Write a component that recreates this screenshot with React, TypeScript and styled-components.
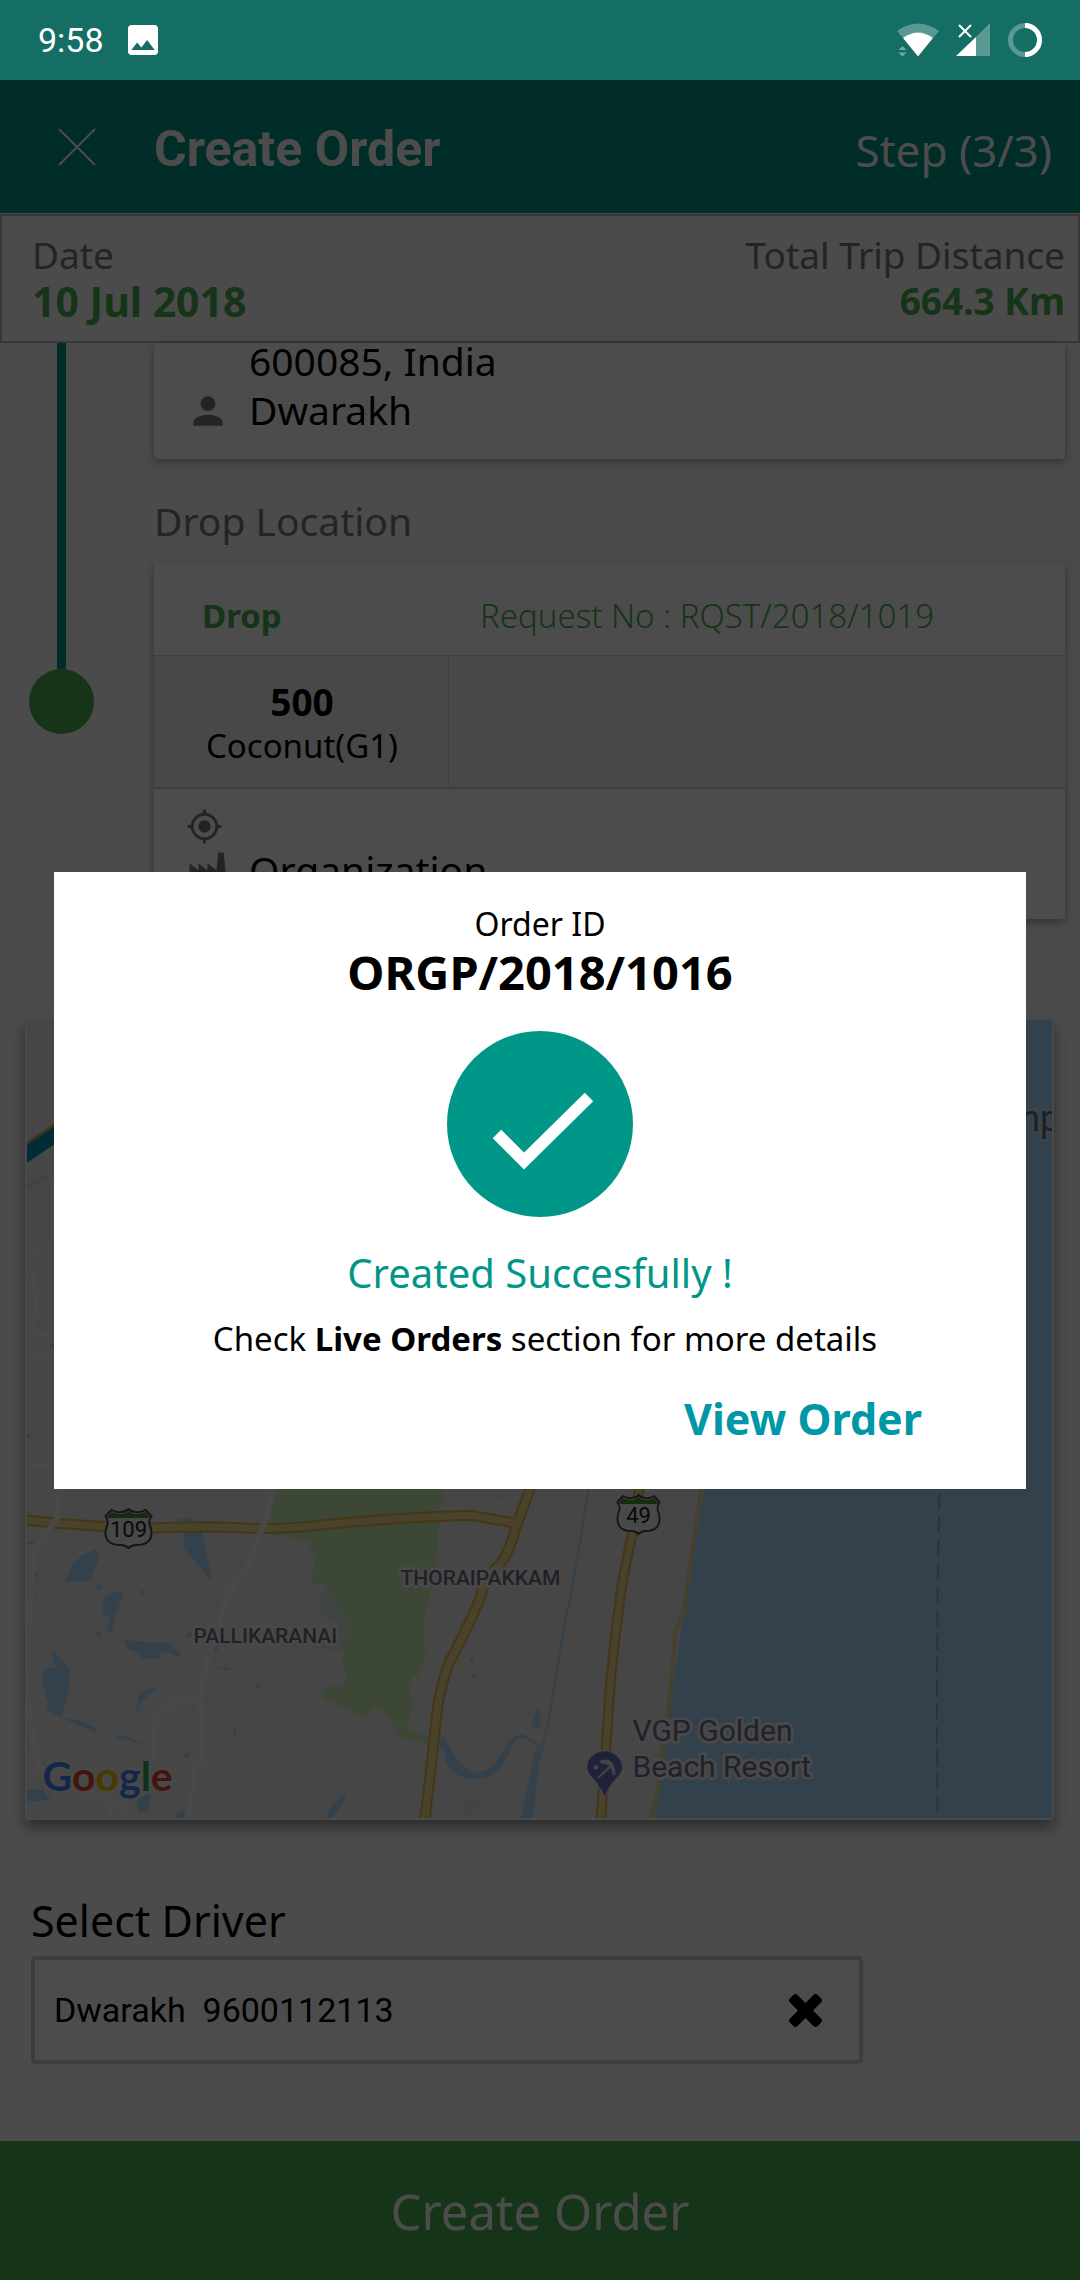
import React from "react";
import styled, { createGlobalStyle } from "styled-components";
import { MdPerson, MdMyLocation } from "react-icons/md";

const sans = `"Noto Sans", "Open Sans", sans-serif`;
const roboto = `Roboto, "Noto Sans", sans-serif`;
const teal = "#009688";
const green = "#4caf50";

const GlobalStyle = createGlobalStyle`
  *, *::before, *::after { box-sizing: border-box; }
  body { margin: 0; background: #fafafa; font-family: ${sans}; color: #000; }
  h1, h2, p, dl, dt, dd, figure { margin: 0; font-weight: 400; }
  button, input { font: inherit; color: inherit; border: 0; padding: 0; background: none; }
  svg { display: block; }
`;

const Screen = styled.div`
  min-height: 100vh;
  display: flex;
  flex-direction: column;
`;

const StatusBar = styled.div`
  height: 80px;
  flex: none;
  display: flex;
  align-items: center;
  gap: 24px;
  padding: 0 38px;
  background: #146e64;
  color: #fff;
  font-family: ${roboto};
  font-size: 34px;
`;

const StatusIcons = styled.div`
  margin-left: auto;
  display: flex;
  align-items: center;
  gap: 17px;
`;

const AppArea = styled.main`
  position: relative;
  flex: 1;
  display: flex;
  flex-direction: column;
`;

const Header = styled.header`
  height: 133px;
  flex: none;
  display: flex;
  align-items: center;
  padding: 0 28px 0 58px;
  background: ${teal};
  color: #fff;
`;

const CloseButton = styled.button`
  width: 96px;
  height: 38px;
`;

const Title = styled.h1`
  flex: 1;
  padding-top: 4px;
  font-family: ${roboto};
  font-size: 50px;
  font-weight: 700;
`;

const Step = styled.span`
  padding-top: 6px;
  font-size: 44px;
`;

const InfoBar = styled.dl`
  flex: none;
  display: flex;
  justify-content: space-between;
  margin-top: 1px;
  padding: 16px 13px 17px 30px;
  border: 2px solid #b8b8b8;
  font-size: 37px;
  line-height: 46px;
  color: #787878;
`;

const InfoItem = styled.div<{ $end?: boolean }>`
  text-align: ${(p) => (p.$end ? "right" : "left")};
`;

const InfoValue = styled.dd<{ $large?: boolean }>`
  color: ${green};
  font-size: ${(p) => (p.$large ? "41px" : "37px")};
  font-weight: 700;
`;

const Content = styled.div`
  flex: 1;
`;

const Timeline = styled.section`
  display: grid;
  grid-template-columns: 154px 1fr;
  padding-right: 15px;
`;

const Rail = styled.div`
  width: 65px;
  margin-left: 29px;
  display: flex;
  flex-direction: column;
  align-items: center;
`;

const RailLine = styled.div`
  width: 9px;
  height: 326px;
  background: ${teal};
`;

const RailDot = styled.div`
  width: 65px;
  height: 65px;
  border-radius: 50%;
  background: ${green};
`;

const Card = styled.article`
  border-radius: 3px;
  background: #fff;
  box-shadow: 0 3px 8px rgba(0, 0, 0, 0.35);
`;

const CardLines = styled.div<{ $compact?: boolean }>`
  display: flex;
  flex-direction: column;
  gap: ${(p) => (p.$compact ? "4px" : "8px")};
  padding: ${(p) => (p.$compact ? "18px" : "0")} 32px 32px;
`;

const CardLine = styled.div`
  height: 38px;
  display: grid;
  grid-template-columns: 63px 1fr;
  align-items: center;
  font-size: 39px;
  line-height: 36px;

  svg { color: #787878; }
  span { padding-bottom: 2px; }
`;

const SectionLabel = styled.h2`
  padding: 38px 0 18px;
  font-size: 39px;
  line-height: 48px;
  color: #787878;
`;

const DropHead = styled.div`
  display: flex;
  padding: 30px 50px 16px 48px;
  font-size: 33px;
  line-height: 46px;
  color: ${green};
`;

const DropTag = styled.strong`
  width: 278px;
`;

const RequestNo = styled.span`
  font-weight: 300;
`;

const Goods = styled.div`
  display: grid;
  grid-template-columns: 295px 1fr;
  height: 134px;
  border-top: 1px solid #d0d0d0;
  border-bottom: 2px solid #cccccc;
  background: #f0f0f0;
`;

const GoodsCell = styled.div`
  display: flex;
  flex-direction: column;
  justify-content: center;
  padding: 4px 0 0 2px;
  border-right: 1px solid #d6d6d6;
  text-align: center;
  font-size: 33px;
  line-height: 44px;
`;

const Quantity = styled.strong`
  font-size: 37px;
`;

const MapCard = styled.figure`
  && { margin: 99px 26px 0 25px; }
  padding: 2px;
  border-radius: 4px;
  background: #f4f4f4;
  box-shadow: 0 8px 14px rgba(0, 0, 0, 0.4);
`;

const MapArt = styled.svg`
  width: 100%;
  height: 798px;
  font-family: ${roboto};
`;

const DriverForm = styled.section`
  padding: 76px 31px 77px;
`;

const DriverLabel = styled.label`
  display: block;
  font-size: 43px;
  line-height: 50px;
`;

const DriverBox = styled.div`
  display: flex;
  align-items: center;
  max-width: 832px;
  height: 108px;
  margin-top: 10px;
  padding: 0 37px 0 19px;
  border: 4px solid #cccccc;
  border-radius: 5px;
  background: #fff;
`;

const DriverInput = styled.input`
  flex: 1;
  min-width: 0;
  font-family: ${roboto};
  font-size: 34px;
`;

const SubmitButton = styled.button`
  && { background: ${green}; color: #fff; }
  flex: none;
  height: 139px;
  font-size: 49px;
`;

const Overlay = styled.div`
  position: absolute;
  inset: 0;
  display: flex;
  align-items: center;
  justify-content: center;
  background: rgba(0, 0, 0, 0.7);
`;

const Dialog = styled.div`
  width: 90%;
  padding: 30px 54px 40px;
  display: flex;
  flex-direction: column;
  align-items: center;
  background: #fff;
  font-size: 32px;
  line-height: 44px;
`;

const OrderId = styled.h2`
  font-size: 47px;
  font-weight: 700;
  line-height: 52px;
`;

const SuccessMark = styled.svg`
  width: 186px;
  height: 186px;
  margin: 33px 0 32px;
`;

const SuccessText = styled.p`
  color: ${teal};
  font-size: 40px;
  line-height: 48px;
`;

const Hint = styled.p`
  padding: 20px 0 2px 10px;
  font-size: 33px;
`;

const ViewButton = styled.button`
  && { color: #0097a7; }
  align-self: flex-end;
  margin: 26px 50px 0 0;
  font-size: 43px;
  font-weight: 700;
  line-height: 60px;
`;

const ImageIcon = () => (
  <svg width="30" height="30" viewBox="3 3 18 18" fill="currentColor" aria-hidden="true">
    <path d="M21 19V5c0-1.100-.9-2-2-2H5c-1.100 0-2 .9-2 2v14c0 1.100.9 2 2 2h14c1.100 0 2-.9 2-2zM8.500 13.500l2.500 3.010L14.500 12l4.500 6H5l3.500-4.500z" />
  </svg>
);

const WifiIcon = () => (
  <svg width="42" height="34" viewBox="0 0 42 34" fill="#fff" aria-hidden="true">
    <path opacity=".3" d="M0 8Q21 -7 42 8L36 15Q21 4 6 15Z" />
    <path d="M6 15Q21 4 36 15L21 33.500Z" />
    <path opacity=".4" d="M1.500 27L5.500 23L9.500 27ZM1.500 29.500H9.500L5.500 33.500Z" />
  </svg>
);

const SignalIcon = () => (
  <svg width="35" height="34" viewBox="0 0 35 34" fill="#fff" aria-hidden="true">
    <path opacity=".3" d="M34 0V33H20V14Z" />
    <path d="M20 14V33H0Z" />
    <path d="M3 2L15 14M15 2L3 14" stroke="#fff" strokeWidth="2" />
  </svg>
);

const BatteryIcon = () => (
  <svg width="34" height="34" viewBox="0 0 34 34" fill="none" strokeWidth="5" aria-hidden="true">
    <circle cx="17" cy="17" r="14.500" stroke="#fff" opacity=".3" />
    <path d="M17 2.500A14.500 14.500 0 0 1 17 31.500" stroke="#fff" />
  </svg>
);

const FactoryIcon = () => (
  <svg width="43" height="43" viewBox="0 0 24 24" fill="currentColor" aria-hidden="true">
    <path d="M4,18V20H8V18H4M4,14V16H14V14H4M10,18V20H14V18H10M16,14V16H20V14H16M16,18V20H20V18H16M2,22V8L7,12V8L12,12V8L17,12L18,2H21L22,12V22H2Z" />
  </svg>
);

const ClearIcon = () => (
  <svg width="33" height="33" viewBox="110 366 1188 1188" fill="currentColor" aria-hidden="true">
    <path d="M1298 1322q0 40-28 68l-136 136q-28 28-68 28t-68-28l-294-294-294 294q-28 28-68 28t-68-28l-136-136q-28-28-28-68t28-68l294-294-294-294q-28-28-28-68t28-68l136-136q28-28 68-28t68 28l294 294 294-294q28-28 68-28t68 28l136 136q28 28 28 68t-28 68l-294 294 294 294q28 28 28 68z" />
  </svg>
);

type ShieldProps = { x: number; y: number; w: number; label: string };

const Shield = ({ x, y, w, label }: ShieldProps) => (
  <g transform={`translate(${x} ${y})`}>
    <g transform={`scale(${w / 48} 1)`}>
      <path
        d="M1 7L7 1Q12 4 17 3Q21 3 24 0Q27 3 31 3Q36 4 41 1L47 7Q43 13 46 18Q49 28 43 33Q39 36 32 36Q27 36 24 39Q21 36 16 36Q9 36 5 33Q-1 28 2 18Q5 13 1 7Z"
        fill="#f0f0f0" stroke="#4a4a4a" strokeWidth="2"
      />
      <path d="M3 7L7 3Q12 5 17 5Q21 5 24 2Q27 5 31 5Q36 5 41 3L45 7V9H3Z" fill="#4f8f2f" />
    </g>
    <text x={w / 2} y="28" textAnchor="middle" fontSize="22" fill="#1c1c1c">{label}</text>
  </g>
);

const halo = { stroke: "#f0f0f0", strokeWidth: 6, paintOrder: "stroke" as const, strokeLinejoin: "round" as const };

const westRoad = "M70 119L160 130Q300 140 420 145Q600 137 760 146Q850 146 950 133Q1200 110 1370 106L1500 130";
const midRoad = "M1545 15L1500 140Q1480 220 1455 250Q1405 300 1395 355Q1375 410 1305 550Q1275 640 1270 700Q1255 850 1235 1020";
const coastRoad = "M291 15L270 160Q240 300 235 350Q205 580 200 700L178 1020";
const roadEdge = "#e6b552";
const roadFill = "#f7e08f";

const RouteMap = () => (
  <MapArt viewBox="0 0 1026 798" preserveAspectRatio="xMidYMid slice" role="img" aria-label="Route map">
    <rect width="1026" height="798" fill="#e9e9e9" />

    <g transform="translate(-27 -20) scale(.3333)" fill="none">
      <path d="M60 448L200 353" stroke="#c9b24a" strokeWidth="12" />
      <path d="M60 477L200 382" stroke="#0093bd" strokeWidth="44" />
      <path d="M80 562L145 528" stroke="#d6dde4" strokeWidth="12" />
      <path
        d="M148 450V500L160 560V735Q140 750 92 752L112 925L92 998L165 1005M80 1083L165 1048M80 1397H165"
        stroke="#f2f2f2" strokeWidth="13"
      />
      <path d="M152 1032h14v14h-14zM82 1302h12v12h-12z" fill="#aadaff" />
    </g>

    <g transform="translate(-27 460) scale(.3444 .3333)">
      <path d="M800 24H1280L1290 66L1275 85V225L1265 232L1270 300L1248 350L1232 440L1238 445L1230 510L1242 515L1215 588L1198 588L1188 650L1205 655L1180 745L1215 760L1250 770V792L1160 770L1130 708L1088 680L1062 718L940 655L948 620H998L1007 585L995 540L1010 430L948 315L905 308L915 240L897 185L770 160Z" fill="#cbedb5" />
      <path d="M948 318L1010 430L998 512L915 505L985 440L932 400V350Z" fill="#d9e8dc" />
      <g fill="#aadaff">
        <path d="M190 303Q210 250 240 225L280 208L287 220V240L268 292L273 302ZM515 115H562L588 160L618 305L535 205V150ZM302 350L355 330L357 350L340 395L333 415L325 462L312 455L320 415L299 400ZM360 480L430 487L490 490L527 520L520 530L490 517L465 520L460 537L412 535L405 520L370 505ZM150 520L163 518L203 565L200 640L180 712L135 690L142 670L123 610L127 580L142 565L165 565ZM405 638L462 618L412 665L397 700ZM180 712L230 720L280 745L285 760L240 740ZM330 775L362 764L420 793L375 780ZM280 315h18v13h-18zM408 330l14 3v8h-14zM543 457h16v15h-16zM617 500h16v14h-16zM742 612h12v16h-12zM678 745h8v22h-8zM534 819h18v15h-18zM103 279h11v12h-11zM78 186h26v6H78zM282 457h13v11h-13zM622 565l15-4 8 8zM645 568l15-8 10 5-12 8zM78 930L125 930L148 960L78 965ZM395 960L440 935L432 995L405 998ZM510 1014L520 995L545 992L540 1014ZM948 1014L970 970L1012 935L985 990L962 1014ZM1543 740L1562 680L1570 700V745ZM1362 545l12-14 7 20zM1372 583h14v9h-14zM1449 43h12v9h-12z" />
        <path d="M1282 765L1310 805Q1350 880 1390 878Q1435 870 1470 800Q1490 760 1520 763L1570 795V805Q1530 770 1508 773Q1490 780 1475 830Q1440 895 1385 897Q1320 895 1297 850L1290 815L1278 805Z" />
        <path d="M1557 805L1570 800L1550 1014H1514Z" />
      </g>
      <path d="M1352 962l28-12 14 20-15 35-35-5z" fill="#dcebdc" />
      <path d="M1330 535l22-8 5 20-15 48h-15zM645 410l18-8v20l-16 8zM98 345l14-3v15l-12 5z" fill="#ece6cf" />
      <path d="M78 760L88 790V810H78Z" fill="#cbedb5" />

      <path
        d="M175 24Q170 90 150 140L103 205Q92 300 84 450L80 640Q90 760 120 880L78 888M800 24L765 125Q735 240 705 285Q655 340 645 400Q590 580 580 660Q480 655 452 720L446 850M582 660L588 850L565 860L560 930L545 1014M230 930Q250 960 320 960Q360 970 375 1014M322 965V1014"
        fill="none" stroke="#f2f2f2" strokeWidth="17" strokeLinejoin="round"
      />

      <g fill="none" strokeLinejoin="round">
        <g stroke={roadEdge} strokeWidth="33">
          <path d={westRoad} />
          <path d={midRoad} />
        </g>
        <g stroke={roadFill} strokeWidth="21">
          <path d={westRoad} />
          <path d={midRoad} />
        </g>
        <path d="M170 110L128 172M785 90L750 175" stroke="#f2f2f2" strokeWidth="17" />
      </g>
    </g>

    <path d="M1026 0H850L697 300L677 472L655 605L628 798H1026Z" fill="#aadaff" />

    <g transform="translate(513 460) scale(.3444 .3333)" fill="none">
      <path d="M470 24L418 400L395 450L380 640Q355 830 342 940L325 1014" stroke="#e8d9a0" strokeWidth="13" />
      <path d="M142 24Q120 200 70 450Q30 720 0 840" stroke="#aadaff" strokeWidth="6" />
      <g strokeLinejoin="round">
        <path d={coastRoad} stroke={roadEdge} strokeWidth="31" />
        <path d={coastRoad} stroke={roadFill} strokeWidth="18" />
      </g>
      <path d="M1162 40Q1150 500 1156 1005" stroke="#83b3dd" strokeWidth="6" strokeDasharray="50 20" />
      <path d="M189 957Q180 925 158 900Q137 880 137 862A52 50 0 0 1 241 862Q241 880 220 900Q198 925 189 957Z" fill="#6c74c9" stroke="#e9e9e9" strokeWidth="3" />
      <circle cx="164" cy="862" r="7" fill="#e4e6f5" />
      <path d="M171 893L207 858M176 846Q215 828 218 885Q216 850 176 846M194 843Q212 856 214 880" stroke="#e4e6f5" strokeWidth="6" />
    </g>

    <Shield x={78} y={489} w={48} label="109" />
    <Shield x={590} y={475} w={44} label="49" />

    <g fontSize="21" fontWeight="500" fill="#6a7182" {...halo}>
      <text x="167" y="623">PALLIKARANAI</text>
      <text x="374" y="565">THORAIPAKKAM</text>
    </g>
    <g fontSize="30" fill="#6b7094" {...halo}>
      <text x="606" y="721">VGP Golden</text>
      <text x="606" y="757">Beach Resort</text>
    </g>
    <text x="982" y="111" fontSize="36" fill="#5c7079" stroke="#bfe0f5" strokeWidth="6" paintOrder="stroke">mp</text>
    <text x="16" y="771" fontFamily="Lato, sans-serif" fontSize="41" fontWeight="700" {...halo}>
      <tspan fill="#4285f4">G</tspan>
      <tspan fill="#ea4335">o</tspan>
      <tspan fill="#fbbc05">o</tspan>
      <tspan fill="#4285f4">g</tspan>
      <tspan fill="#34a853">l</tspan>
      <tspan fill="#ea4335">e</tspan>
    </text>
  </MapArt>
);

export default function App() {
  const [driver, setDriver] = React.useState("Dwarakh\u00a0 9600112113");

  return (
    <>
      <GlobalStyle />
      <Screen>
        <StatusBar>
          <span>9:58</span>
          <ImageIcon />
          <StatusIcons>
            <WifiIcon />
            <SignalIcon />
            <BatteryIcon />
          </StatusIcons>
        </StatusBar>

        <AppArea>
          <Header>
            <CloseButton type="button" aria-label="Close">
              <svg width="38" height="38" viewBox="0 0 38 38" stroke="#fff" strokeWidth="2" aria-hidden="true">
                <path d="M1 1L37 37M37 1L1 37" />
              </svg>
            </CloseButton>
            <Title>Create Order</Title>
            <Step>Step (3/3)</Step>
          </Header>

          <InfoBar>
            <InfoItem>
              <dt>Date</dt>
              <InfoValue $large>10 Jul 2018</InfoValue>
            </InfoItem>
            <InfoItem $end>
              <dt>Total Trip Distance</dt>
              <InfoValue>664.3 Km</InfoValue>
            </InfoItem>
          </InfoBar>

          <Content>
            <Timeline>
              <Rail>
                <RailLine />
                <RailDot />
              </Rail>
              <div>
                <Card>
                  <CardLines>
                    <CardLine>
                      <i />
                      <span>600085, India</span>
                    </CardLine>
                    <CardLine>
                      <MdPerson size={44} />
                      <span>Dwarakh</span>
                    </CardLine>
                  </CardLines>
                </Card>

                <SectionLabel>Drop Location</SectionLabel>

                <Card>
                  <DropHead>
                    <DropTag>Drop</DropTag>
                    <RequestNo>Request No : RQST/2018/1019</RequestNo>
                  </DropHead>
                  <Goods>
                    <GoodsCell>
                      <Quantity>500</Quantity>
                      <span>Coconut(G1)</span>
                    </GoodsCell>
                  </Goods>
                  <CardLines $compact>
                    <CardLine>
                      <MdMyLocation size={37} />
                    </CardLine>
                    <CardLine>
                      <FactoryIcon />
                      <span>Organization</span>
                    </CardLine>
                  </CardLines>
                </Card>
              </div>
            </Timeline>

            <MapCard>
              <RouteMap />
            </MapCard>

            <DriverForm>
              <DriverLabel htmlFor="driver">Select Driver</DriverLabel>
              <DriverBox>
                <DriverInput id="driver" value={driver} onChange={(e) => setDriver(e.target.value)} />
                <button type="button" aria-label="Clear driver" onClick={() => setDriver("")}>
                  <ClearIcon />
                </button>
              </DriverBox>
            </DriverForm>
          </Content>

          <SubmitButton type="button">Create Order</SubmitButton>

          <Overlay>
            <Dialog role="dialog" aria-modal="true" aria-labelledby="order-id">
              <p>Order ID</p>
              <OrderId id="order-id">ORGP/2018/1016</OrderId>
              <SuccessMark viewBox="0 0 186 186" aria-hidden="true">
                <circle cx="93" cy="93" r="93" fill={teal} />
                <path d="M50 103L77 130L142 66" fill="none" stroke="#fff" strokeWidth="12" />
              </SuccessMark>
              <SuccessText>Created Succesfully !</SuccessText>
              <Hint>
                Check <strong>Live Orders</strong> section for more details
              </Hint>
              <ViewButton type="button">View Order</ViewButton>
            </Dialog>
          </Overlay>
        </AppArea>
      </Screen>
    </>
  );
}
